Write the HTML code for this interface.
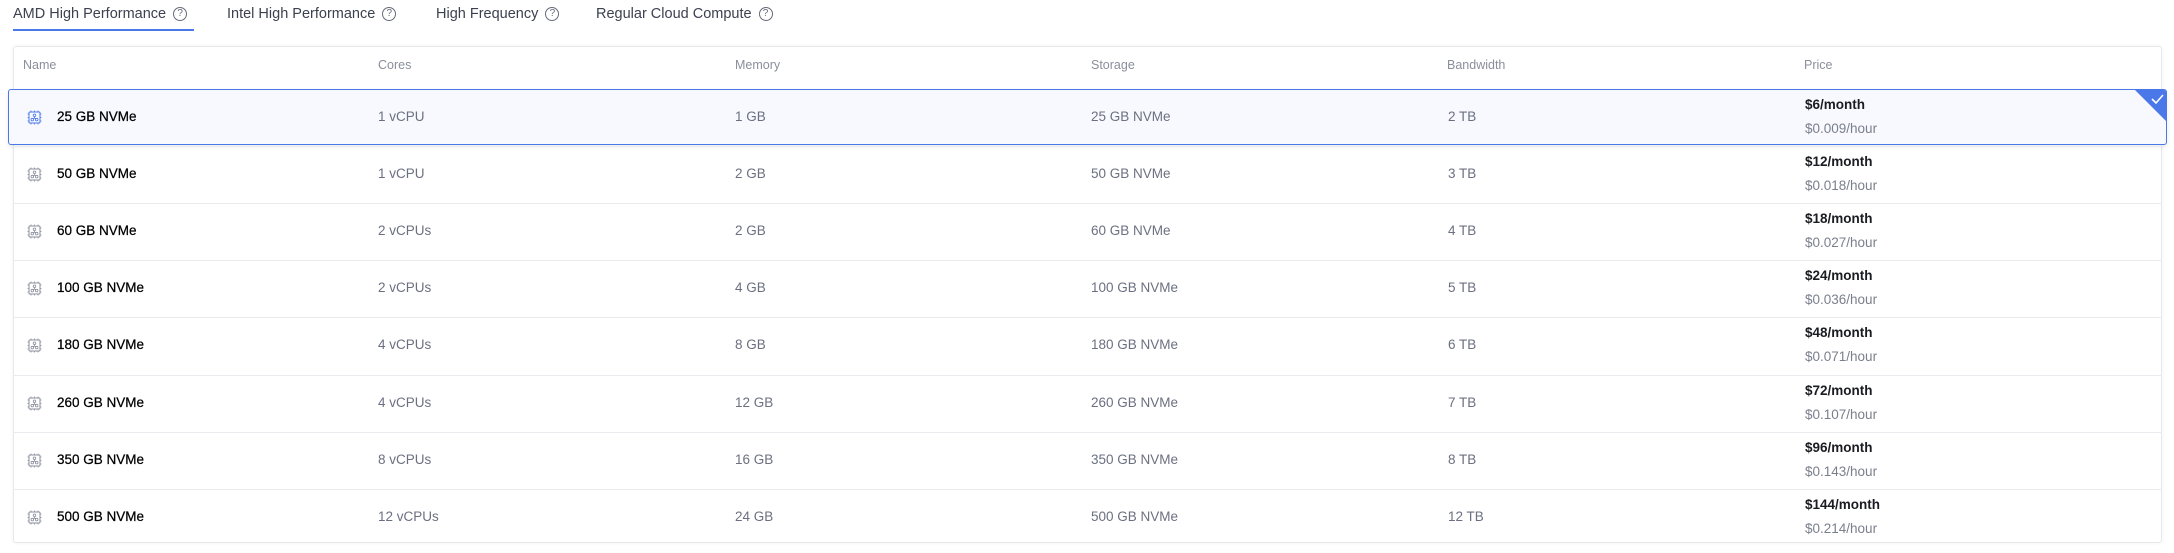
<!DOCTYPE html>
<html><head><meta charset="utf-8"><style>
*{box-sizing:border-box;margin:0;padding:0}
body{width:2174px;height:553px;background:#fff;font-family:"Liberation Sans",Arial,sans-serif;position:relative;overflow:hidden}
.tab{position:absolute;top:5px;font-size:14.5px;color:#3c4150;white-space:nowrap;line-height:18px}
.q{display:inline-block;width:14px;height:14px;border:1.2px solid #666b78;border-radius:50%;font-size:10px;line-height:12px;text-align:center;color:#666b78;vertical-align:top;margin-top:2px;margin-left:7px}
.ul{position:absolute;left:13px;top:29px;width:181px;height:2px;background:#4a78e8}
.card{position:absolute;left:13px;top:46px;width:2149px;height:497px;border:1px solid #e6e8ec;border-radius:3px;box-shadow:0 0 4px rgba(0,0,0,.06);background:#fff}
.hdr{position:absolute;top:58px;font-size:12.5px;color:#8a8f9c}
.row{position:absolute;left:13px;width:2149px;height:57px;border-top:1px solid #e8eaee}
.sel{position:absolute;left:8px;top:89px;width:2159px;height:56px;border:1px solid #4a78e8;border-radius:3px;background:#f8f9fe;overflow:hidden;box-shadow:0 2px 4px rgba(0,0,0,.08)}
.c{position:absolute;font-size:13.5px;color:#6b7080;white-space:nowrap}
.n{color:#000;-webkit-text-stroke:0.25px #000}
.p1{position:absolute;font-size:13.5px;color:#1a1c22;font-weight:bold}
.p2{position:absolute;font-size:13.5px;color:#7a7f8c}
</style></head><body>
<div class="tab" style="left:13px">AMD High Performance<span class="q">?</span></div>
<div class="tab" style="left:227px">Intel High Performance<span class="q">?</span></div>
<div class="tab" style="left:436px">High Frequency<span class="q">?</span></div>
<div class="tab" style="left:596px">Regular Cloud Compute<span class="q">?</span></div>
<div class="ul"></div>
<div class="card"></div>
<div class="hdr" style="left:23px">Name</div>
<div class="hdr" style="left:378px">Cores</div>
<div class="hdr" style="left:735px">Memory</div>
<div class="hdr" style="left:1091px">Storage</div>
<div class="hdr" style="left:1447px">Bandwidth</div>
<div class="hdr" style="left:1804px">Price</div>
<div id="rows"></div>
<script>
var d=[["25 GB NVMe","1 vCPU","1 GB","25 GB NVMe","2 TB","$6/month","$0.009/hour"],
["50 GB NVMe","1 vCPU","2 GB","50 GB NVMe","3 TB","$12/month","$0.018/hour"],
["60 GB NVMe","2 vCPUs","2 GB","60 GB NVMe","4 TB","$18/month","$0.027/hour"],
["100 GB NVMe","2 vCPUs","4 GB","100 GB NVMe","5 TB","$24/month","$0.036/hour"],
["180 GB NVMe","4 vCPUs","8 GB","180 GB NVMe","6 TB","$48/month","$0.071/hour"],
["260 GB NVMe","4 vCPUs","12 GB","260 GB NVMe","7 TB","$72/month","$0.107/hour"],
["350 GB NVMe","8 vCPUs","16 GB","350 GB NVMe","8 TB","$96/month","$0.143/hour"],
["500 GB NVMe","12 vCPUs","24 GB","500 GB NVMe","12 TB","$144/month","$0.214/hour"]];
var h="";
d.forEach(function(r,i){
var top=89+i*57.1, cy=top+28;
var col=i==0?"#4a78e8":"#8a8f9c";
if(i==0){h+='<div class="sel"><svg style="position:absolute;right:0;top:0" width="31" height="31"><polygon points="0,0 31,0 31,31" fill="#4a78e8"/><path d="M17 9l4 4 7-8" stroke="#fff" stroke-width="1.6" fill="none"/></svg></div>';}
else h+='<div class="row" style="top:'+top+'px"></div>';
h+='<svg style="position:absolute;left:27px;top:'+(cy-7)+'px" width="15" height="15" viewBox="0 0 15 15"><rect x="2" y="2" width="11" height="11" rx="1" fill="none" stroke="'+col+'" stroke-width="1"/><path d="M4 0.5v1.5M7.5 0.5v1.5M11 0.5v1.5M4 13v1.5M7.5 13v1.5M11 13v1.5M0.5 4h1.5M0.5 7.5h1.5M0.5 11h1.5M13 4h1.5M13 7.5h1.5M13 11h1.5" stroke="'+col+'" stroke-width=".8"/><circle cx="7.5" cy="5.3" r="1.3" fill="none" stroke="'+col+'" stroke-width=".8"/><circle cx="5.3" cy="9.6" r="1.3" fill="none" stroke="'+col+'" stroke-width=".8"/><circle cx="9.7" cy="9.6" r="1.3" fill="none" stroke="'+col+'" stroke-width=".8"/><path d="M7.5 6.6v1.5l-1.6 0.8M7.5 8.1l1.6 0.8" stroke="'+col+'" stroke-width=".8" fill="none"/></svg>';
h+='<div class="c n" style="left:57px;top:'+(cy-8)+'px">'+r[0]+'</div>';
h+='<div class="c" style="left:378px;top:'+(cy-8)+'px">'+r[1]+'</div>';
h+='<div class="c" style="left:735px;top:'+(cy-8)+'px">'+r[2]+'</div>';
h+='<div class="c" style="left:1091px;top:'+(cy-8)+'px">'+r[3]+'</div>';
h+='<div class="c" style="left:1448px;top:'+(cy-8)+'px">'+r[4]+'</div>';
h+='<div class="p1" style="left:1805px;top:'+(cy-20)+'px">'+r[5]+'</div>';
h+='<div class="p2" style="left:1805px;top:'+(cy+4)+'px">'+r[6]+'</div>';
});
document.getElementById("rows").innerHTML=h;
</script>
</body></html>
